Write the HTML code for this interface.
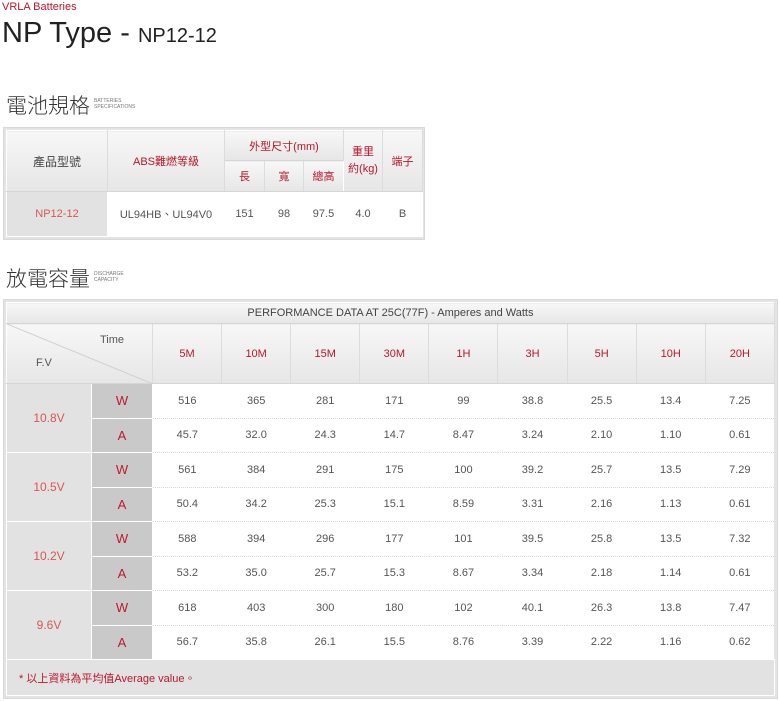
<!DOCTYPE html>
<html><head><meta charset="utf-8"><style>
*{margin:0;padding:0;box-sizing:border-box}
body{width:780px;height:701px;background:#fff;font-family:"Liberation Sans","Noto Sans CJK TC",sans-serif;position:relative;overflow:hidden;color:#555}
.a{position:absolute}
.red{color:#b8182b}
table{border-collapse:collapse;table-layout:fixed;position:absolute}
td{text-align:center;font-size:11px;padding:0;border:1px solid #fff}
.h{background:linear-gradient(#f7f7f7,#e6e6e6);border-color:#fff #dcdcdc #d6d6d6 #fff}
.frame{position:absolute;background:#e4e4e4;border:1px solid #d8d8d8}
.d td.v{border:none;border-bottom:1px dotted #d8d8d8;background:#fff}
.fv{background:#e2e2e2;color:#d8584e;font-size:12px}
.wa{background:#c9c9c9;color:#c0182b;font-size:13px}
</style></head><body>
<div class="a red" style="left:2px;top:1px;font-size:11px">VRLA Batteries</div>
<div class="a" style="left:2px;top:17px;font-size:29px;color:#222;white-space:nowrap">NP Type - <span style="font-size:20px">NP12-12</span></div>

<div class="a" style="left:6px;top:90px;font-size:21px;color:#333;font-family:'Noto Sans CJK TC',sans-serif;font-weight:300">電池規格</div>
<div class="a" style="left:94px;top:98px;font-size:5px;line-height:6px;color:#777">BATTERIES<br>SPECIFICATIONS</div>

<div class="frame" style="left:3px;top:127px;width:422px;height:113px"></div>
<table style="left:6px;top:130px;width:416px">
<colgroup><col style="width:101px"><col style="width:117px"><col style="width:40px"><col style="width:39px"><col style="width:40px"><col style="width:39px"><col style="width:40px"></colgroup>
<tr style="height:30px"><td class="h" rowspan="2" style="font-size:12px;color:#444">產品型號</td><td class="h red" rowspan="2">ABS難燃等級</td><td class="h red" colspan="3">外型尺寸(mm)</td><td class="h red" rowspan="2" style="line-height:17px">重里<br>約(kg)</td><td class="h red" rowspan="2">端子</td></tr>
<tr style="height:31px"><td class="h red">長</td><td class="h red">寬</td><td class="h red">總高</td></tr>
<tr style="height:45px"><td style="background:#e2e2e2;color:#d8584e">NP12-12</td><td style="background:#fff">UL94HB、UL94V0</td><td style="background:#fff">151</td><td style="background:#fff">98</td><td style="background:#fff">97.5</td><td style="background:#fff">4.0</td><td style="background:#fff">B</td></tr>
</table>

<div class="a" style="left:6px;top:263px;font-size:21px;color:#333;font-family:'Noto Sans CJK TC',sans-serif;font-weight:300">放電容量</div>
<div class="a" style="left:94px;top:271px;font-size:5px;line-height:6px;color:#777">DISCHARGE<br>CAPACITY</div>

<div class="frame" style="left:3px;top:299px;width:775px;height:400px"></div>
<table class="d" style="left:6px;top:302px;width:768px">
<colgroup><col style="width:85px"><col style="width:61px"><col span="9" style="width:69.1px"></colgroup>
<tr style="height:21px"><td class="h" colspan="11" style="color:#444">PERFORMANCE DATA AT 25C(77F) - Amperes and Watts</td></tr>
<tr style="height:60px"><td class="h" colspan="2" style="position:relative;background:linear-gradient(#f7f7f7,#e6e6e6)">
<svg class="a" style="left:0;top:0" width="146" height="60"><line x1="0" y1="0" x2="146" y2="60" stroke="#d0d0d0"/></svg>
<span class="a" style="left:93px;top:10px;font-size:11px">Time</span><span class="a" style="left:29px;top:33px;font-size:11px">F.V</span></td>
<td class="h red">5M</td><td class="h red">10M</td><td class="h red">15M</td><td class="h red">30M</td><td class="h red">1H</td><td class="h red">3H</td><td class="h red">5H</td><td class="h red">10H</td><td class="h red">20H</td></tr>
<tr style="height:34.5px"><td class="fv" rowspan="2">10.8V</td><td class="wa">W</td><td class="v">516</td><td class="v">365</td><td class="v">281</td><td class="v">171</td><td class="v">99</td><td class="v">38.8</td><td class="v">25.5</td><td class="v">13.4</td><td class="v">7.25</td></tr>
<tr style="height:34.5px"><td class="wa">A</td><td class="v">45.7</td><td class="v">32.0</td><td class="v">24.3</td><td class="v">14.7</td><td class="v">8.47</td><td class="v">3.24</td><td class="v">2.10</td><td class="v">1.10</td><td class="v">0.61</td></tr>
<tr style="height:34.5px"><td class="fv" rowspan="2">10.5V</td><td class="wa">W</td><td class="v">561</td><td class="v">384</td><td class="v">291</td><td class="v">175</td><td class="v">100</td><td class="v">39.2</td><td class="v">25.7</td><td class="v">13.5</td><td class="v">7.29</td></tr>
<tr style="height:34.5px"><td class="wa">A</td><td class="v">50.4</td><td class="v">34.2</td><td class="v">25.3</td><td class="v">15.1</td><td class="v">8.59</td><td class="v">3.31</td><td class="v">2.16</td><td class="v">1.13</td><td class="v">0.61</td></tr>
<tr style="height:34.5px"><td class="fv" rowspan="2">10.2V</td><td class="wa">W</td><td class="v">588</td><td class="v">394</td><td class="v">296</td><td class="v">177</td><td class="v">101</td><td class="v">39.5</td><td class="v">25.8</td><td class="v">13.5</td><td class="v">7.32</td></tr>
<tr style="height:34.5px"><td class="wa">A</td><td class="v">53.2</td><td class="v">35.0</td><td class="v">25.7</td><td class="v">15.3</td><td class="v">8.67</td><td class="v">3.34</td><td class="v">2.18</td><td class="v">1.14</td><td class="v">0.61</td></tr>
<tr style="height:34.5px"><td class="fv" rowspan="2">9.6V</td><td class="wa">W</td><td class="v">618</td><td class="v">403</td><td class="v">300</td><td class="v">180</td><td class="v">102</td><td class="v">40.1</td><td class="v">26.3</td><td class="v">13.8</td><td class="v">7.47</td></tr>
<tr style="height:34.5px"><td class="wa">A</td><td class="v">56.7</td><td class="v">35.8</td><td class="v">26.1</td><td class="v">15.5</td><td class="v">8.76</td><td class="v">3.39</td><td class="v">2.22</td><td class="v">1.16</td><td class="v">0.62</td></tr>
<tr style="height:36px"><td colspan="11" style="background:#e2e2e2;text-align:left;padding-left:12px;color:#b8182b;font-size:11px">* 以上資料為平均值Average value。</td></tr>
</table>
</body></html>
